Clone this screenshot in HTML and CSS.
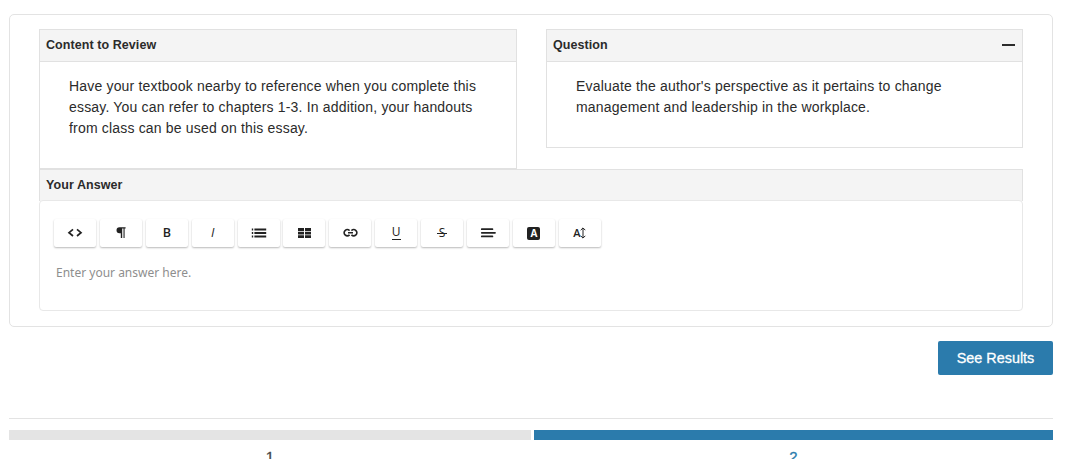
FILE: index.html
```html
<!DOCTYPE html>
<html lang="en">
<head>
    <meta charset="UTF-8">
    <meta name="viewport" content="width=device-width, initial-scale=1.0">
    <title>Essay</title>
    <link rel="stylesheet" href="styles.css">
</head>
<body>
    <main class="essay">
        <div class="columns">
            <section class="panel review">
                <h2 class="panel-title">Content to Review</h2>
                <p>Have your textbook nearby to reference when you complete this<br>essay. You can refer to chapters 1-3. In addition, your handouts<br>from class can be used on this essay.</p>
            </section>
            <section class="panel question">
                <h2 class="panel-title">Question <span class="collapse"></span></h2>
                <p>Evaluate the author's perspective as it pertains to change<br>management and leadership in the workplace.</p>
            </section>
        </div>
        <section class="answer">
            <h2 class="panel-title">Your Answer</h2>
            <div class="editor">
                <div class="toolbar">
                    <button><svg viewBox="0 0 16 16"><path d="M6 4.4 2 7.7 6 11M10 4.4 14 7.7 10 11" fill="none" stroke="currentColor" stroke-width="1.7"/></svg></button>
                    <button><svg viewBox="0 0 16 16"><path d="M6.5 2.3H12.6V3.4H11.6V13H10.5V3.4H9.2V13H7.8V8.3H6.5A3 3 0 0 1 6.5 2.3Z" fill="currentColor"/></svg></button>
                    <button><span class="bold">B</span></button>
                    <button><span class="italic">I</span></button>
                    <button><svg viewBox="0 0 16 16"><path d="M3.4 4.5H15.2M3.4 8H15.2M3.4 11.5H15.2M.8 4.5H2.2M.8 8H2.2M.8 11.5H2.2" stroke="currentColor" stroke-width="1.8"/></svg></button>
                    <button><svg viewBox="0 0 16 16"><path d="M2 3H8V5.9H2zM9 3H15V5.9H9zM2 6.7H8V9.4H2zM9 6.7H15V9.4H9zM2 10.2H8V13H2zM9 10.2H15V13H9z" fill="currentColor"/></svg></button>
                    <button><svg viewBox="0 0 16 16"><path d="M7.6 5.6A3.2 3 0 1 0 7.6 9.8M9.4 5.6A3.2 3 0 1 1 9.4 9.8M6 7.7H11" fill="none" stroke="currentColor" stroke-width="1.6"/></svg></button>
                    <button><span class="underline">U</span></button>
                    <button><span class="strike">S</span></button>
                    <button><svg viewBox="0 0 16 16"><path d="M1.8 4.2H12.4M1.8 7.8H15M1.8 11.4H12.4" stroke="currentColor" stroke-width="1.8" stroke-linecap="round"/></svg></button>
                    <button><span class="color">A</span></button>
                    <button><span class="size">A</span><svg class="arrow" viewBox="0 0 6 12"><path d="M3 1V11M.7 3.2 3 .9 5.3 3.2M.7 8.8 3 11.1 5.3 8.8" fill="none" stroke="currentColor"/></svg></button>
                </div>
                <div class="placeholder">Enter your answer here.</div>
            </div>
        </section>
    </main>
    <div class="actions">
        <button class="results">See Results</button>
    </div>
    <footer class="steps">
        <div class="step">1</div>
        <div class="step active">2</div>
    </footer>
</body>
</html>
```
FILE: styles.css
```css
* {
    box-sizing: border-box;
}

body {
    margin: 0;
    padding: 14px 23px 0 9px;
    height: 459px;
    overflow: hidden;
    background: #fff;
    color: #2b2b2b;
    font-family: "Liberation Sans", Arial, sans-serif;
}

.essay {
    height: 313px;
    padding: 14px 29px;
    border: 1px solid #e3e3e3;
    border-radius: 5px;
}

.columns {
    display: grid;
    grid-template-columns: 478px 477px;
    justify-content: space-between;
    align-items: start;
}

.panel {
    border: 1px solid #e1e1e1;
}

.review {
    height: 140px;
}

.question {
    height: 119px;
}

.panel-title {
    display: flex;
    justify-content: space-between;
    align-items: center;
    height: 32px;
    margin: 0;
    padding: 0 7px 2px 6px;
    background: #f4f4f4;
    border-bottom: 1px solid #e1e1e1;
    font-size: 12.5px;
    font-weight: bold;
    letter-spacing: 0.07px;
}

.collapse {
    width: 13px;
    height: 2px;
    background: #2b2b2b;
}

.panel p {
    margin: 14px 0 0 29px;
    font-size: 14px;
    line-height: 21px;
    letter-spacing: 0.18px;
    white-space: nowrap;
}

/* answer */
.answer .panel-title {
    border: 1px solid #e1e1e1;
    border-bottom: 0;
}

.editor {
    height: 111px;
    margin-top: -1px;
    padding: 18px 14px;
    background: #fff;
    border: 1px solid #e8e8e8;
    border-radius: 4px;
}

.toolbar {
    display: flex;
    gap: 3.9px;
}

.toolbar button {
    display: flex;
    justify-content: center;
    align-items: center;
    width: 42px;
    height: 28px;
    padding: 0;
    background: #fff;
    border: 0;
    border-radius: 2px;
    box-shadow: 0 1px 2px rgba(0, 0, 0, 0.28);
    color: #222;
    font-family: "Open Sans", sans-serif;
    font-size: 12.5px;
    line-height: 14px;
}

.toolbar svg {
    width: 16px;
    height: 16px;
}

.bold {
    font-weight: 600;
}

.italic {
    font-style: italic;
    font-weight: 500;
}

.underline {
    height: 14px;
    border-bottom: 1px solid #222;
    font-size: 12px;
    line-height: 12px;
}

.strike {
    padding: 0 2px;
    background: linear-gradient(#222, #222) 0 7px / 100% 1px no-repeat;
    font-size: 12px;
    font-weight: 500;
}

.color {
    width: 13px;
    height: 13px;
    border-radius: 2px;
    background: #222;
    color: #fff;
    font-size: 10px;
    font-weight: bold;
    line-height: 13px;
}

.size {
    font-size: 11px;
    font-weight: 600;
}

.toolbar .arrow {
    width: 6px;
    height: 12px;
}

.placeholder {
    margin: 17px 0 0 2px;
    color: #8e8e8e;
    font-family: "Noto Sans", sans-serif;
    font-size: 12px;
    line-height: 17px;
}

.actions {
    display: flex;
    justify-content: flex-end;
    padding: 14px 0 43px;
}

.results {
    width: 115px;
    height: 34px;
    padding: 0;
    background: #2b7bac;
    border: 0;
    border-radius: 2px;
    color: #fff;
    font-family: "Liberation Sans", Arial, sans-serif;
    font-size: 14.4px;
    -webkit-text-stroke: 0.3px #fff;
}

/* progress */
.steps {
    display: grid;
    grid-template-columns: 522px 519px;
    gap: 3px;
    padding-top: 11px;
    border-top: 1px solid #e3e3e3;
}

.step {
    padding-top: 8px;
    border-top: 10px solid #e4e4e4;
    color: #444;
    font-size: 15px;
    line-height: 17px;
    text-align: center;
    -webkit-text-stroke: 0.3px currentColor;
}

.active {
    border-color: #2b7bac;
    color: #2b7bac;
}
```
